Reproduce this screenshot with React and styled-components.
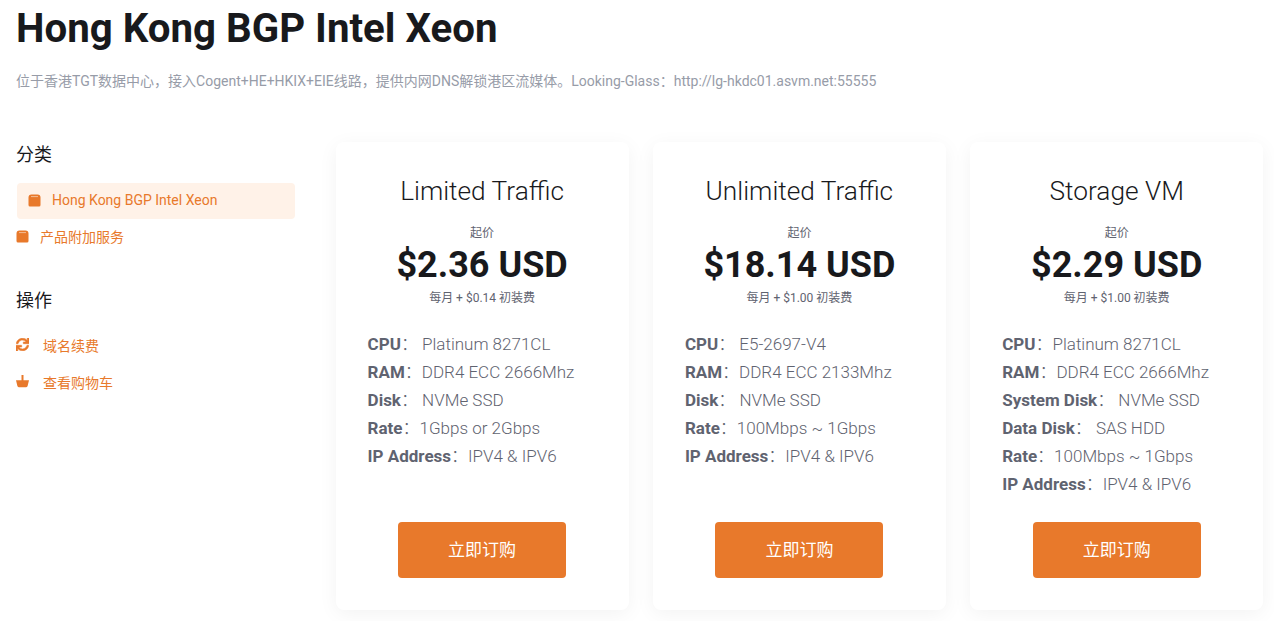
import React from 'react'
import styled, { createGlobalStyle } from 'styled-components'
import { FaSync } from 'react-icons/fa'

const GlobalStyle = createGlobalStyle`
  html, body {
    margin: 0;
    padding: 0;
    background: #fff;
    overflow: hidden;
    font-family: Roboto, "Noto Sans CJK SC", sans-serif;
  }
`

const plans = [
  {
    title: 'Limited Traffic',
    price: '$2.36 USD',
    setup: '每月 + $0.14 初装费',
    specs: [
      ['CPU', ' Platinum 8271CL'],
      ['RAM', 'DDR4 ECC 2666Mhz'],
      ['Disk', ' NVMe SSD'],
      ['Rate', '1Gbps or 2Gbps'],
      ['IP Address', 'IPV4 & IPV6'],
    ],
  },
  {
    title: 'Unlimited Traffic',
    price: '$18.14 USD',
    setup: '每月 + $1.00 初装费',
    specs: [
      ['CPU', ' E5-2697-V4'],
      ['RAM', 'DDR4 ECC 2133Mhz'],
      ['Disk', ' NVMe SSD'],
      ['Rate', '100Mbps ~ 1Gbps'],
      ['IP Address', 'IPV4 & IPV6'],
    ],
  },
  {
    title: 'Storage VM',
    price: '$2.29 USD',
    setup: '每月 + $1.00 初装费',
    specs: [
      ['CPU', 'Platinum 8271CL'],
      ['RAM', 'DDR4 ECC 2666Mhz'],
      ['System Disk', ' NVMe SSD'],
      ['Data Disk', ' SAS HDD'],
      ['Rate', '100Mbps ~ 1Gbps'],
      ['IP Address', 'IPV4 & IPV6'],
    ],
  },
]

function BoxIcon() {
  return (
    <svg width="13" height="13" viewBox="0 0 13 13">
      <path d="M3.5 0.5h6a3 3 0 0 1 3 3V11a1.5 1.5 0 0 1-1.5 1.5H2A1.5 1.5 0 0 1 .5 11V3.5a3 3 0 0 1 3-3z" fill="#e8792b" />
      <path d="M3 2.6h7" stroke="#fff" strokeOpacity=".5" strokeWidth="1" />
    </svg>
  )
}

function BasketIcon() {
  return (
    <svg width="13" height="13" viewBox="0 0 13 13">
      <path d="M5.5 0h2v6h-2z" fill="#e8792b" />
      <path d="M0 5.2h13l-1.4 5.9a1.4 1.4 0 0 1-1.4 1.1H2.8a1.4 1.4 0 0 1-1.4-1.1z" fill="#e8792b" />
    </svg>
  )
}

export default function App() {
  return (
    <Page>
      <GlobalStyle />
      <Header>
        <h1>Hong Kong BGP Intel Xeon</h1>
        <p>位于香港TGT数据中心，接入Cogent+HE+HKIX+EIE线路，提供内网DNS解锁港区流媒体。Looking-Glass：http://lg-hkdc01.asvm.net:55555</p>
      </Header>
      <Body>
        <Sidebar>
          <SideTitle>分类</SideTitle>
          <ActiveLink><BoxIcon />Hong Kong BGP Intel Xeon</ActiveLink>
          <SideLink><BoxIcon />产品附加服务</SideLink>
          <SideTitle $second>操作</SideTitle>
          <Actions>
            <ActionLink><FaSync size={13} stroke="#e8792b" strokeWidth="22" />域名续费</ActionLink>
            <ActionLink><BasketIcon />查看购物车</ActionLink>
          </Actions>
        </Sidebar>
        <Cards>
          {plans.map((plan) => (
            <Card key={plan.title}>
              <CardTitle>{plan.title}</CardTitle>
              <From>起价</From>
              <Price>{plan.price}</Price>
              <Setup>{plan.setup}</Setup>
              <Specs>
                {plan.specs.map(([label, value]) => (
                  <Spec key={label}>
                    <b>{label}</b>：{value}
                  </Spec>
                ))}
              </Specs>
              <OrderButton>立即订购</OrderButton>
            </Card>
          ))}
        </Cards>
      </Body>
    </Page>
  )
}

const Page = styled.div`
  width: 1274px;
  height: 621px;
  overflow: hidden;
  background: #fff;
`

const Header = styled.header`
  padding: 7px 0 0 16px;

  h1 {
    margin: 0;
    font-size: 40.25px;
    line-height: 44px;
    font-weight: 700;
    color: #18191c;
  }

  p {
    margin: 20px 0 0;
    font-size: 14px;
    line-height: 20px;
    color: #979ca8;
  }
`

const Body = styled.div`
  display: flex;
  margin-top: 51px;
  padding-left: 16px;
`

const Sidebar = styled.aside`
  width: 279px;
  margin-right: 40.6px;
  padding-top: 2px;
`

const SideTitle = styled.h3`
  margin: ${(p) => (p.$second ? '35px' : '0')} 0 0;
  font-size: 18px;
  line-height: 22px;
  font-weight: 400;
  color: #18191c;
`

const ActiveLink = styled.a`
  display: flex;
  align-items: center;
  gap: 11px;
  height: 34px;
  margin: 17px 0 0 1px;
  padding: 0 0 2px 11px;
  border-radius: 4px;
  background: #fff2e8;
  font-size: 14px;
  color: #e8792b;
`

const SideLink = styled.a`
  display: flex;
  align-items: center;
  gap: 11px;
  height: 34px;
  padding-bottom: 2px;
  font-size: 14px;
  color: #e8792b;
`

const Actions = styled.div`
  display: flex;
  flex-direction: column;
  margin-top: 14px;
`

const ActionLink = styled.a`
  display: flex;
  align-items: center;
  gap: 14px;
  height: 37px;
  font-size: 14px;
  color: #e8792b;
`

const Cards = styled.main`
  display: flex;
  gap: 24.3px;
`

const Card = styled.section`
  display: flex;
  flex-direction: column;
  width: 293px;
  height: 468px;
  padding: 32px 0;
  box-sizing: border-box;
  border-radius: 8px;
  background: #fff;
  box-shadow: 0 4px 20px rgba(0, 0, 0, 0.05);
  text-align: center;
`

const CardTitle = styled.h2`
  margin: 0;
  font-size: 26.25px;
  line-height: 34px;
  font-weight: 300;
  color: #18191c;
`

const From = styled.div`
  margin-top: 17px;
  font-size: 12px;
  line-height: 16px;
  color: #5f6370;
`

const Price = styled.div`
  font-size: 36px;
  line-height: 48px;
  font-weight: 700;
  color: #18191c;
`

const Setup = styled.div`
  font-size: 12px;
  line-height: 18px;
  color: #5f6370;
`

const Specs = styled.ul`
  margin: 23px 0 0;
  padding: 0 0 0 32px;
  list-style: none;
  text-align: left;
`

const Spec = styled.li`
  font-size: 17px;
  line-height: 28px;
  font-weight: 300;
  color: #5f6370;
  white-space: pre;

  b {
    font-weight: 700;
  }
`

const OrderButton = styled.button`
  width: 168px;
  height: 56px;
  margin: auto auto 0;
  padding: 0 0 3px;
  border: 0;
  border-radius: 4px;
  background: #e8792b;
  color: #fff;
  font: 400 17px Roboto, "Noto Sans CJK SC", sans-serif;
`
